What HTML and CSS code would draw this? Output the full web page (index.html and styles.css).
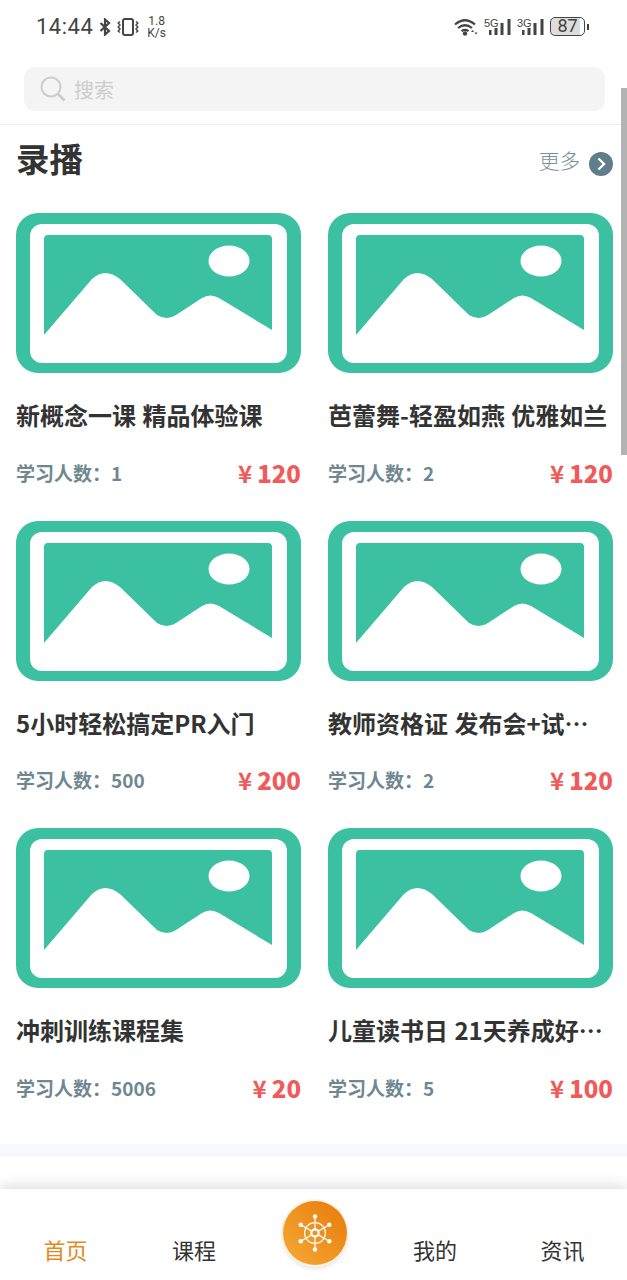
FILE: index.html
```html
<!DOCTYPE html>
<html lang="zh-CN">
<head>
    <meta charset="UTF-8">
    <meta name="viewport" content="width=device-width, initial-scale=1.0">
    <title>录播</title>
    <link rel="stylesheet" href="styles.css">
</head>
<body>
    <svg class="defs" width="0" height="0">
        <symbol id="placeholder" viewBox="0 0 285 160">
            <rect width="285" height="160" rx="22" fill="#3bc0a1"/>
            <rect x="14" y="11" width="257" height="139" rx="12" fill="#fff"/>
            <path d="M28 26q0-4 4-4h220q4 0 4 4v91l-53-32q-9-5-17 0l-26 17q-9 6-19 0L104 66q-15-12-28 0l-48 56z" fill="#3bc0a1"/>
            <ellipse cx="213" cy="48" rx="20.5" ry="15.5" fill="#fff"/>
        </symbol>
        <symbol id="bars" viewBox="0 0 22 18">
            <path d="M3 12h-3v5h3zM9 10h-3v7h3zM15 5h-3v12h3zM22 1h-3v16h3z" fill="#444" transform="translate(-0.500)"/>
        </symbol>
    </svg>

    <div class="status">
        <div class="status-left">
            <span class="clock">14:44</span>
            <svg class="ic-bt" viewBox="0 0 12 18"><path d="M1.500 5l8.500 8-4 3.500V1.500l4 3.500-8.500 8" fill="none" stroke="#444" stroke-width="2.200"/></svg>
            <svg class="ic-vib" viewBox="0 0 22 18"><rect x="6" y="1" width="10" height="16" rx="2" fill="none" stroke="#444" stroke-width="2"/><path d="M3 3.500l-1.800 1.500 1.800 2-1.800 2 1.800 2-1.800 2 1.800 1.500M19 3.500l1.800 1.500-1.800 2 1.800 2-1.800 2 1.800 2-1.800 1.500" fill="none" stroke="#444" stroke-width="1.400"/></svg>
            <span class="speed"><span>1.8</span><span>K/s</span></span>
        </div>
        <div class="status-right">
            <svg class="ic-wifi" viewBox="0 0 24 18"><path d="M1 6.500q10-8.500 20 0M4 10q7-5.500 14 0M7.500 13.200q3.500-2.500 7 0" fill="none" stroke="#444" stroke-width="2.200"/><circle cx="11" cy="15.500" r="2.200" fill="#444"/><path d="M17 14l1.500-2 1.500 2zM20.500 14.500l1.500 2 1.500-2z" fill="#444"/></svg>
            <span class="net"><small>5G</small><svg><use href="#bars"/></svg></span>
            <span class="net"><small>3G</small><svg><use href="#bars"/></svg></span>
            <span class="battery">87</span><span class="battery-tip"></span>
        </div>
    </div>

    <div class="search-wrap">
        <div class="search">
            <svg class="ic-search" viewBox="0 0 26 26"><circle cx="11" cy="11" r="9.500" fill="none" stroke="#ccc" stroke-width="2"/><path d="M18 18l6.500 6.500" stroke="#ccc" stroke-width="2.600"/></svg>
            <span>搜索</span>
        </div>
    </div>

    <div class="content">
        <div class="section-head">
            <h2>录播</h2>
            <div class="more">更多
                <svg viewBox="0 0 24 24"><circle cx="12" cy="12" r="12" fill="#607d8b"/><path d="M9.500 6.500l5.500 5.500-5.500 5.500" fill="none" stroke="#fff" stroke-width="2.400"/></svg>
            </div>
        </div>

        <div class="grid">
            <div class="card">
                <svg class="thumb"><use href="#placeholder"/></svg>
                <div class="title">新概念一课 精品体验课</div>
                <div class="meta"><span class="learners">学习人数：1</span><span class="price">¥<b>120</b></span></div>
            </div>
            <div class="card">
                <svg class="thumb"><use href="#placeholder"/></svg>
                <div class="title">芭蕾舞-轻盈如燕 优雅如兰</div>
                <div class="meta"><span class="learners">学习人数：2</span><span class="price">¥<b>120</b></span></div>
            </div>
            <div class="card">
                <svg class="thumb"><use href="#placeholder"/></svg>
                <div class="title">5小时轻松搞定PR入门</div>
                <div class="meta"><span class="learners">学习人数：500</span><span class="price">¥<b>200</b></span></div>
            </div>
            <div class="card">
                <svg class="thumb"><use href="#placeholder"/></svg>
                <div class="title">教师资格证 发布会+试听课程</div>
                <div class="meta"><span class="learners">学习人数：2</span><span class="price">¥<b>120</b></span></div>
            </div>
            <div class="card">
                <svg class="thumb"><use href="#placeholder"/></svg>
                <div class="title">冲刺训练课程集</div>
                <div class="meta"><span class="learners">学习人数：5006</span><span class="price">¥<b>20</b></span></div>
            </div>
            <div class="card">
                <svg class="thumb"><use href="#placeholder"/></svg>
                <div class="title">儿童读书日 21天养成好习惯</div>
                <div class="meta"><span class="learners">学习人数：5</span><span class="price">¥<b>100</b></span></div>
            </div>
        </div>
        <div class="divider"></div>
    </div>

    <div class="tabbar">
        <div class="tab active">首页</div>
        <div class="tab">课程</div>
        <div class="tab tab-center">
            <div class="helm">
                <svg viewBox="0 0 40 40" fill="none" stroke="#fff" stroke-width="1.100">
                    <circle cx="20" cy="20" r="9.500"/>
                    <circle cx="20" cy="20" r="3.300" stroke-width="2"/>
                    <path d="M20 5v11.700M20 23.300V35M7 12.500l10 5.800M23 21.700l10 5.800M7 27.500l10-5.800M23 18.300l10-5.800"/>
                    <g fill="#fff" stroke="none">
                        <circle cx="20" cy="5" r="2"/><circle cx="20" cy="35" r="2"/>
                        <circle cx="7" cy="12.500" r="2"/><circle cx="33" cy="12.500" r="2"/>
                        <circle cx="7" cy="27.500" r="2"/><circle cx="33" cy="27.500" r="2"/>
                    </g>
                </svg>
            </div>
        </div>
        <div class="tab">我的</div>
        <div class="tab">资讯</div>
    </div>

    <div class="scrollbar"></div>
</body>
</html>
```

FILE: styles.css
```css
* {
    box-sizing: border-box;
}
html, body {
    margin: 0;
    height: 1280px;
    overflow: hidden;
}
body {
    position: relative;
    display: flex;
    flex-direction: column;
    font-family: "Noto Sans CJK SC", "Noto Sans", sans-serif;
    background: #fff;
    color: #333;
}
.defs {
    position: absolute;
}

.status {
    height: 55px;
    padding: 13px 38px 0 36px;
    display: flex;
    justify-content: space-between;
    align-items: flex-start;
    color: #444;
}
.status-left, .status-right {
    display: flex;
    align-items: center;
    height: 27px;
}
.clock {
    font-family: Roboto, sans-serif;
    font-size: 22px;
    letter-spacing: 0.5px;
}
.ic-bt {
    width: 12px;
    height: 18px;
    margin-left: 6px;
}
.ic-vib {
    width: 22px;
    height: 18px;
    margin-left: 6px;
}
.speed {
    display: flex;
    flex-direction: column;
    align-items: center;
    font-family: Roboto, sans-serif;
    font-size: 12px;
    line-height: 12px;
    margin-left: 8px;
}
.ic-wifi {
    width: 24px;
    height: 18px;
}
.net {
    display: flex;
    align-items: flex-end;
    margin-left: 6px;
    height: 18px;
}
.net small {
    font-family: "Liberation Sans Narrow", "Liberation Sans", sans-serif;
    font-size: 11px;
    line-height: 10px;
    align-self: flex-start;
    width: 12px;
    margin-right: -7px;
}
.net svg {
    width: 22px;
    height: 18px;
}
.battery {
    width: 35px;
    height: 19px;
    margin-left: 6px;
    border: 1.500px solid #444;
    border-radius: 5px;
    background: linear-gradient(to right, #ddd 87%, #fff 87%);
    font-family: Roboto, sans-serif;
    font-size: 18px;
    line-height: 16px;
    text-align: center;
}
.battery-tip {
    width: 2px;
    height: 6px;
    margin-left: 2px;
    background: #444;
}

.search-wrap {
    height: 70px;
    padding: 12px 22px 0 24px;
    border-bottom: 1px solid #eee;
}
.search {
    height: 44px;
    display: flex;
    align-items: center;
    padding-left: 16px;
    background: #f4f4f4;
    border-radius: 11px;
    color: #ccc;
    font-size: 20px;
}
.ic-search {
    width: 26px;
    height: 26px;
    margin-right: 8px;
}

.content {
    flex: 1;
    overflow: hidden;
    padding: 0 14px 0 16px;
}
.section-head {
    display: flex;
    justify-content: space-between;
    align-items: center;
    height: 72px;
}
.section-head h2 {
    margin: 0 0 6px;
    font-size: 33.500px;
    font-weight: 700;
    line-height: 66px;
}
.more {
    display: flex;
    align-items: center;
    gap: 9px;
    padding-bottom: 2px;
    color: #78909c;
    font-size: 20.500px;
    font-weight: 300;
}
.more svg {
    width: 24px;
    height: 24px;
    margin-top: 8px;
}

.grid {
    display: grid;
    grid-template-columns: 285px 285px;
    column-gap: 27px;
    margin-top: 16px;
}
.card {
    height: 307.500px;
    min-width: 0;
}
.thumb {
    display: block;
    width: 285px;
    height: 160px;
}
.title {
    margin-top: 24px;
    padding-right: 3px;
    font-size: 24px;
    font-weight: 700;
    line-height: 36px;
    word-spacing: 1px;
    white-space: nowrap;
    overflow: hidden;
    text-overflow: ellipsis;
}
.meta {
    margin-top: 22px;
    display: flex;
    justify-content: space-between;
    align-items: center;
    height: 34px;
}
.learners {
    color: #6f8791;
    font-size: 19px;
    font-weight: 700;
}
.price {
    color: #f05a5a;
    font-size: 24px;
    font-weight: 700;
}
.price b {
    margin-left: 5px;
}
.divider {
    height: 13px;
    margin: 8px -14px 0 -16px;
    background: #f8f9fa;
}

.tabbar {
    height: 91px;
    display: grid;
    grid-template-columns: 131px 126px 115px 126px 129px;
    background: #fff;
    box-shadow: 0 -2px 14px rgba(0, 0, 0, 0.16);
    position: relative;
}
.tab {
    padding-top: 43px;
    text-align: center;
    font-size: 22px;
    line-height: 34px;
    color: #333;
}
.tab.active {
    color: #e08a1e;
}
.tab-center {
    padding-top: 12px;
}
.helm {
    width: 64px;
    height: 64px;
    margin: 0 auto;
    padding: 10px;
    border-radius: 50%;
    background: linear-gradient(to top right, #f5ab35, #e87a0c);
    box-shadow: 0 0 0 2px #fdf3e4, 0 3px 5px rgba(0, 0, 0, 0.15);
}
.helm svg {
    display: block;
    width: 44px;
    height: 44px;
}

.scrollbar {
    position: absolute;
    right: 0;
    top: 88px;
    width: 6px;
    height: 367px;
    background: #b3b3b3;
}
```
